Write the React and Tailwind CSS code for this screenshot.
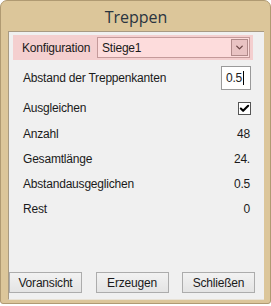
import { ChevronDown, Check } from 'lucide-react';

const rows = [
  { label: 'Anzahl', value: '48' },
  { label: 'Gesamtlänge', value: '24.' },
  { label: 'Abstandausgeglichen', value: '0.5' },
  { label: 'Rest', value: '0' },
];

export default function App() {
  return (
    <div className="w-[271px] h-[306px] bg-white font-['Liberation_Sans',sans-serif] text-[12px] tracking-[-0.2px] text-[#1a1a1a]">
      <div className="w-[271px] h-[304px] flex flex-col border border-[#b09a72] rounded-t-[7px] rounded-b-[3px] bg-[#dcc69a] pl-[7px] pr-[6px] pb-[3px]">
        {/* Title bar */}
        <div className="h-[30px] flex items-center justify-center pt-[1px]">
          <span className="font-['Open_Sans',sans-serif] text-[16px] tracking-normal text-[#2a3440]">Treppen</span>
        </div>

        {/* Client area */}
        <div className="flex-1 flex flex-col bg-[#f0f0f0] border-t border-l border-[#a89a82] border-b border-b-[#e8e2d6]">
          {/* Konfiguration */}
          <div className="mt-[3px] ml-[4px] w-[240px] h-[25px] bg-[#f4cfcf] flex items-center pl-[9px] pr-[3px]">
            <span className="w-[75px]">Konfiguration</span>
            <div className="flex-1 h-[21px] bg-[#fddcdc] border border-[#c49a9a] flex items-center pl-[4px] pr-[1px]">
              <span className="flex-1">Stiege1</span>
              <div className="w-[17px] h-[17px] bg-[#e9c3c3] border border-[#b08a8a] flex items-center justify-center">
                <ChevronDown size={11} strokeWidth={3} className="text-[#6b4646]" />
              </div>
            </div>
          </div>

          {/* Abstand der Treppenkanten */}
          <div className="h-[35px] flex items-center pl-[14px] pr-[13px]">
            <span className="flex-1">Abstand der Treppenkanten</span>
            <div className="w-[30px] h-[24px] bg-white border border-[#9a9a9a] flex items-center pl-[4px] text-[#222]">
              0.5<span className="w-[1px] h-[14px] bg-black ml-[1px]"></span>
            </div>
          </div>

          {/* Ausgleichen */}
          <div className="h-[26px] flex items-center pl-[14px] pr-[13px]">
            <span className="flex-1">Ausgleichen</span>
            <div className="w-[13px] h-[13px] bg-white border border-[#555] flex items-center justify-center">
              <Check size={11} strokeWidth={4.5} className="text-black" />
            </div>
          </div>

          {rows.map((r) => (
            <div key={r.label} className="h-[25px] flex items-center pl-[14px] pr-[14px]">
              <span className="flex-1">{r.label}</span>
              <span>{r.value}</span>
            </div>
          ))}

          <div className="flex-1" />

          {/* Buttons */}
          <div className="flex items-center justify-between pr-[9px] mb-[6px]">
            <button className="w-[73px] h-[21px] border border-[#acacac] bg-gradient-to-b from-[#f2f2f2] to-[#e4e4e4] text-[#1a1a1a]">
              Voransicht
            </button>
            <button className="w-[73px] h-[21px] border border-[#acacac] bg-gradient-to-b from-[#f2f2f2] to-[#e4e4e4] text-[#1a1a1a]">
              Erzeugen
            </button>
            <button className="w-[73px] h-[21px] border border-[#acacac] bg-gradient-to-b from-[#f2f2f2] to-[#e4e4e4] text-[#1a1a1a]">
              Schließen
            </button>
          </div>
        </div>
      </div>
    </div>
  );
}
